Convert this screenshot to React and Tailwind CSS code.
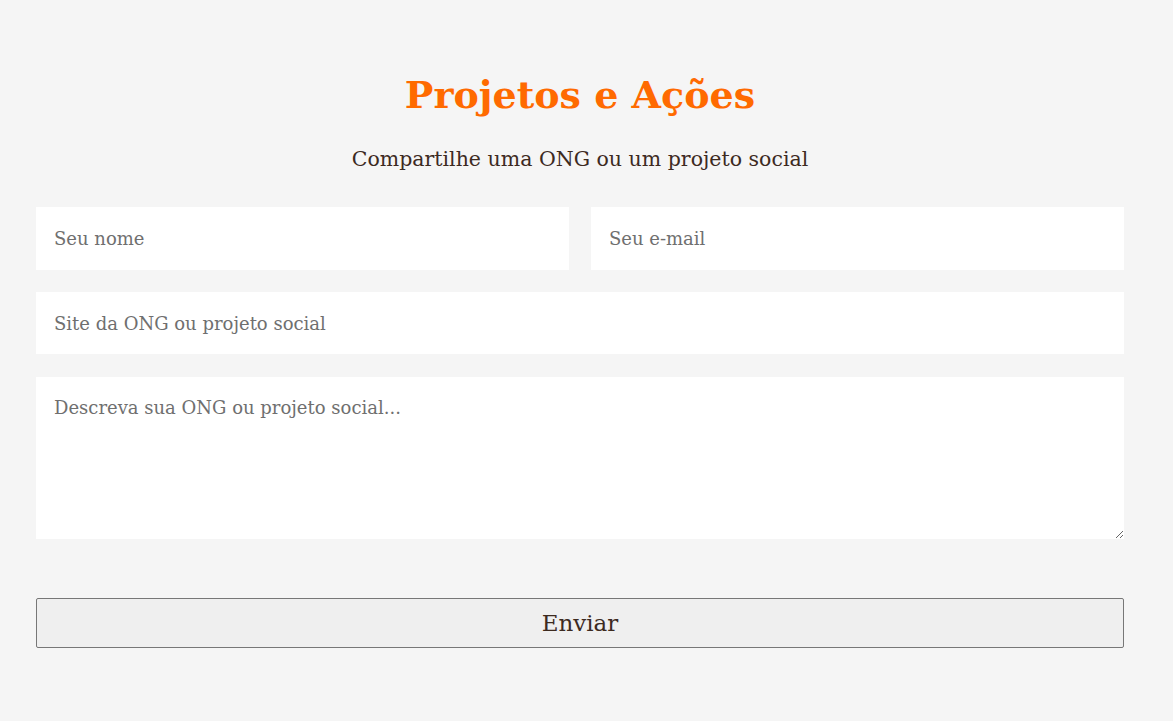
export default function App() {
  const font = { fontFamily: '"DejaVu Serif", "Liberation Serif", serif' };
  return (
    <div className="min-h-[721px] bg-[#f5f5f5] text-[#3d2a1f]" style={font}>
      <div className="ml-[36px] w-[1088px] pt-[65px]">
        <h1 className="text-center text-[38px] leading-[60px] font-bold text-[#ff6a00]">
          Projetos e Ações
        </h1>
        <p className="mt-[19px] text-center text-[20.5px] leading-[30px]">
          Compartilhe uma ONG ou um projeto social
        </p>
        <form className="mt-[33px] flex flex-col gap-[22px]">
          <div className="flex gap-[22px]">
            <input
              className="h-[63px] flex-1 bg-white px-[18px] text-[18px] outline-none placeholder:text-[#6f6f6f]"
              placeholder="Seu nome"
            />
            <input
              className="h-[63px] flex-1 bg-white px-[18px] text-[18px] outline-none placeholder:text-[#6f6f6f]"
              placeholder="Seu e-mail"
            />
          </div>
          <input
            className="h-[62px] bg-white px-[18px] text-[18px] outline-none placeholder:text-[#6f6f6f]"
            placeholder="Site da ONG ou projeto social"
          />
          <textarea
            className="mt-[1px] h-[162px] bg-white px-[18px] py-[17px] text-[18px] outline-none placeholder:text-[#6f6f6f]"
            placeholder="Descreva sua ONG ou projeto social..."
          />
          <button
            type="button"
            className="mt-[37px] h-[50px] rounded-[2px] border border-[#777] bg-[#efefef] text-[23px] text-[#3d2a1f]"
          >
            Enviar
          </button>
        </form>
      </div>
    </div>
  );
}
